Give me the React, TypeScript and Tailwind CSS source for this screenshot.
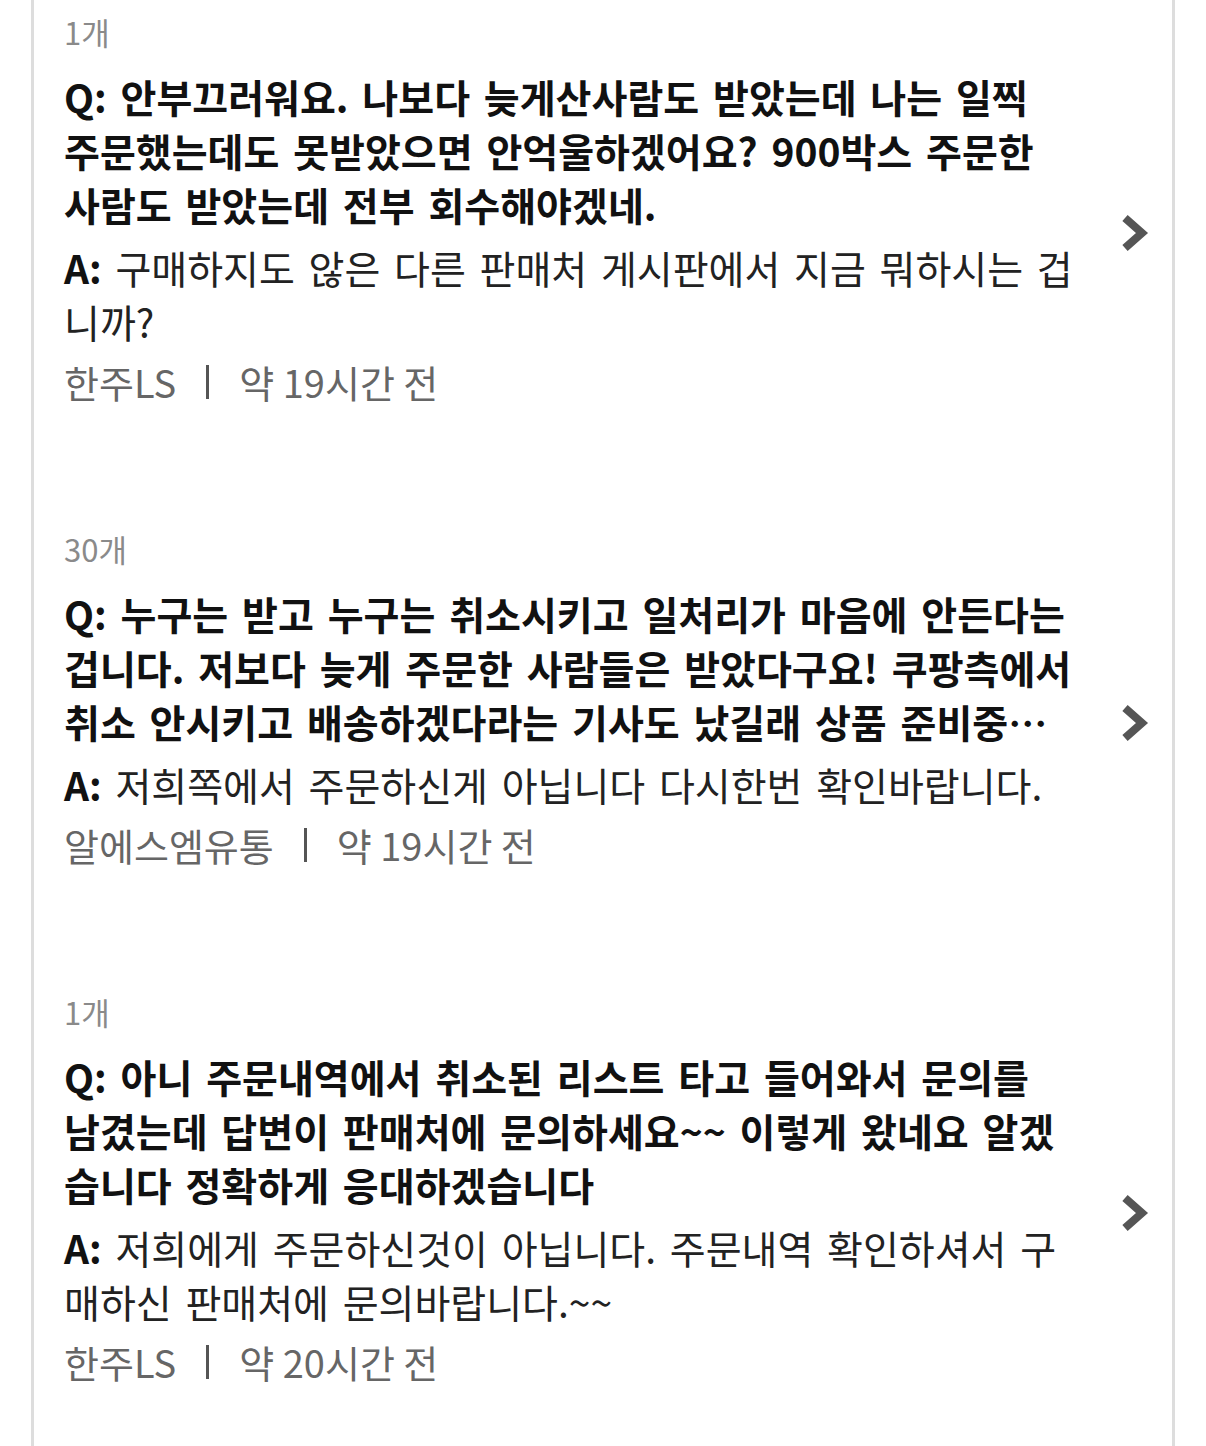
import React from "react";

type Inquiry = {
  count: string;
  question: string;
  answer: string;
  seller: string;
  time: string;
};

const inquiries: Inquiry[] = [
  {
    count: "1개",
    question:
      "안부끄러워요. 나보다 늦게산사람도 받았는데 나는 일찍 주문했는데도 못받았으면 안억울하겠어요? 900박스 주문한 사람도 받았는데 전부 회수해야겠네.",
    answer: "구매하지도 않은 다른 판매처 게시판에서 지금 뭐하시는 겁니까?",
    seller: "한주LS",
    time: "약 19시간 전",
  },
  {
    count: "30개",
    question:
      "누구는 받고 누구는 취소시키고 일처리가 마음에 안든다는 겁니다. 저보다 늦게 주문한 사람들은 받았다구요! 쿠팡측에서 취소 안시키고 배송하겠다라는 기사도 났길래 상품 준비중으로 바뀌어서 기다렸는데 이게 뭡니까",
    answer: "저희쪽에서 주문하신게 아닙니다 다시한번 확인바랍니다.",
    seller: "알에스엠유통",
    time: "약 19시간 전",
  },
  {
    count: "1개",
    question:
      "아니 주문내역에서 취소된 리스트 타고 들어와서 문의를 남겼는데 답변이 판매처에 문의하세요~~ 이렇게 왔네요 알겠습니다 정확하게 응대하겠습니다",
    answer: "저희에게 주문하신것이 아닙니다. 주문내역 확인하셔서 구매하신 판매처에 문의바랍니다.~~",
    seller: "한주LS",
    time: "약 20시간 전",
  },
];

function Chevron() {
  return (
    <svg width="30" height="40" viewBox="0 0 30 40" className="shrink-0">
      <polyline
        points="5,5 22,20 5,35"
        fill="none"
        stroke="#555555"
        strokeWidth="8"
        strokeLinejoin="miter"
        strokeLinecap="butt"
      />
    </svg>
  );
}

function InquiryItem({ item }: { item: Inquiry }) {
  return (
    <div className="flex flex-col">
      <div className="text-[31px] leading-[44px] text-[#8a8a8a]">{item.count}</div>
      <div className="flex items-center">
        <div className="w-[1009px] pt-[15px] [word-spacing:5px]">
          <p className="line-clamp-3 text-[39px] font-bold leading-[54px] text-[#111111]">
            Q: {item.question}
          </p>
          <p className="mt-[9px] text-[39px] leading-[54px] text-[#222222]">
            <span className="font-bold text-[#111111]">A:</span> {item.answer}
          </p>
          <div className="mt-[7px] flex items-center text-[38px] leading-[54px] text-[#666666] [word-spacing:0px]">
            <span>{item.seller}</span>
            <span className="mx-[30px] h-[34px] w-[3px] bg-[#555555]" />
            <span>{item.time}</span>
          </div>
        </div>
        <div className="ml-[47px] mt-[2px]">
          <Chevron />
        </div>
      </div>
    </div>
  );
}

export default function App() {
  return (
    <div
      className="min-h-[1446px] bg-white"
      style={{ fontFamily: '"Noto Sans CJK KR", "Noto Sans", sans-serif' }}
    >
      <div className="mx-[31px] min-h-[1446px] border-x-[3px] border-[#dddddd] bg-white pl-[30px] pt-[10px]">
        <div className="flex flex-col gap-[118px]">
          {inquiries.map((item, i) => (
            <InquiryItem key={i} item={item} />
          ))}
        </div>
      </div>
    </div>
  );
}
